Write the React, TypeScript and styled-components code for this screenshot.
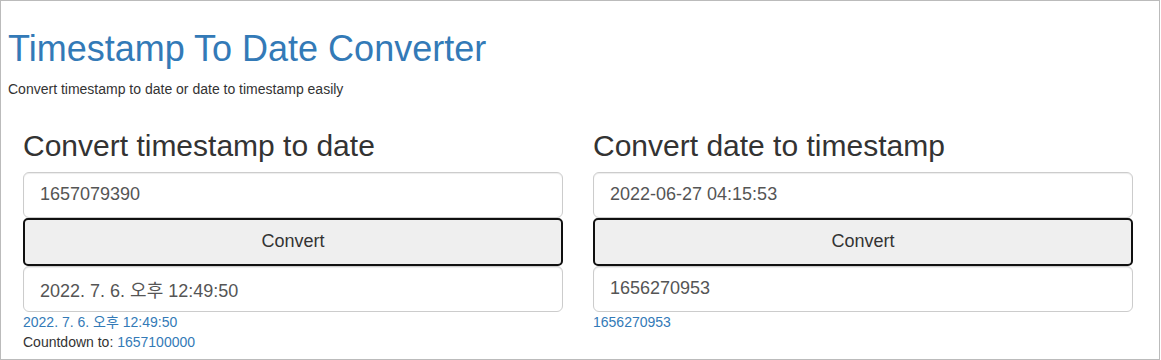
import React from "react";
import styled, { createGlobalStyle } from "styled-components";

const GlobalStyle = createGlobalStyle`
  html, body {
    margin: 0;
    padding: 0;
    background: #ffffff;
  }
  body {
    font-family: "Liberation Sans", Arial, "Noto Sans CJK KR", sans-serif;
    font-size: 14px;
    line-height: 1.42857;
    color: #333333;
  }
  * {
    box-sizing: border-box;
  }
`;

const Frame = styled.div`
  width: 1160px;
  height: 360px;
  border: 1px solid #bbbbbb;
  padding: 0 7px;
  overflow: hidden;
`;

const Title = styled.h1`
  margin: 28px 0 10px;
  font-size: 36px;
  font-weight: 400;
  line-height: 1.1;
  color: #337ab7;
`;

const Lead = styled.p`
  margin: 0 0 10px;
  font-size: 14px;
  line-height: 20px;
`;

const Row = styled.div`
  display: grid;
  grid-template-columns: 1fr 1fr;
  width: 1140px;
`;

const Column = styled.section`
  padding: 0 15px;
`;

const Heading = styled.h2`
  margin: 20px 0 10px;
  font-size: 30px;
  font-weight: 400;
  line-height: 33px;
  color: #333333;
`;

const Field = styled.input`
  display: block;
  width: 100%;
  height: 46px;
  padding: 10px 16px;
  font-family: inherit;
  font-size: 18px;
  line-height: 1.33;
  color: #555555;
  background: #ffffff;
  border: 1px solid #cccccc;
  border-radius: 6px;
  box-shadow: inset 0 1px 1px rgba(0, 0, 0, 0.075);
  outline: none;
`;

const ConvertButton = styled.button`
  display: block;
  width: 100%;
  height: 48px;
  font-family: inherit;
  font-size: 18px;
  color: #333333;
  background: #efefef;
  border: 2px solid #101010;
  border-radius: 5px;
  cursor: pointer;
`;

const Note = styled.div`
  font-size: 14px;
  line-height: 20px;
  color: #333333;
`;

const Link = styled.a`
  color: #337ab7;
  text-decoration: none;
`;

export default function App() {
  return (
    <>
      <GlobalStyle />
      <Frame>
        <Title>Timestamp To Date Converter</Title>
        <Lead>Convert timestamp to date or date to timestamp easily</Lead>
        <Row>
          <Column>
            <Heading>Convert timestamp to date</Heading>
            <Field defaultValue="1657079390" />
            <ConvertButton>Convert</ConvertButton>
            <Field defaultValue="2022. 7. 6. 오후 12:49:50" />
            <Note>
              <Link href="#">2022. 7. 6. 오후 12:49:50</Link>
            </Note>
            <Note>
              Countdown to: <Link href="#">1657100000</Link>
            </Note>
          </Column>
          <Column>
            <Heading>Convert date to timestamp</Heading>
            <Field defaultValue="2022-06-27 04:15:53" />
            <ConvertButton>Convert</ConvertButton>
            <Field defaultValue="1656270953" />
            <Note>
              <Link href="#">1656270953</Link>
            </Note>
          </Column>
        </Row>
      </Frame>
    </>
  );
}
